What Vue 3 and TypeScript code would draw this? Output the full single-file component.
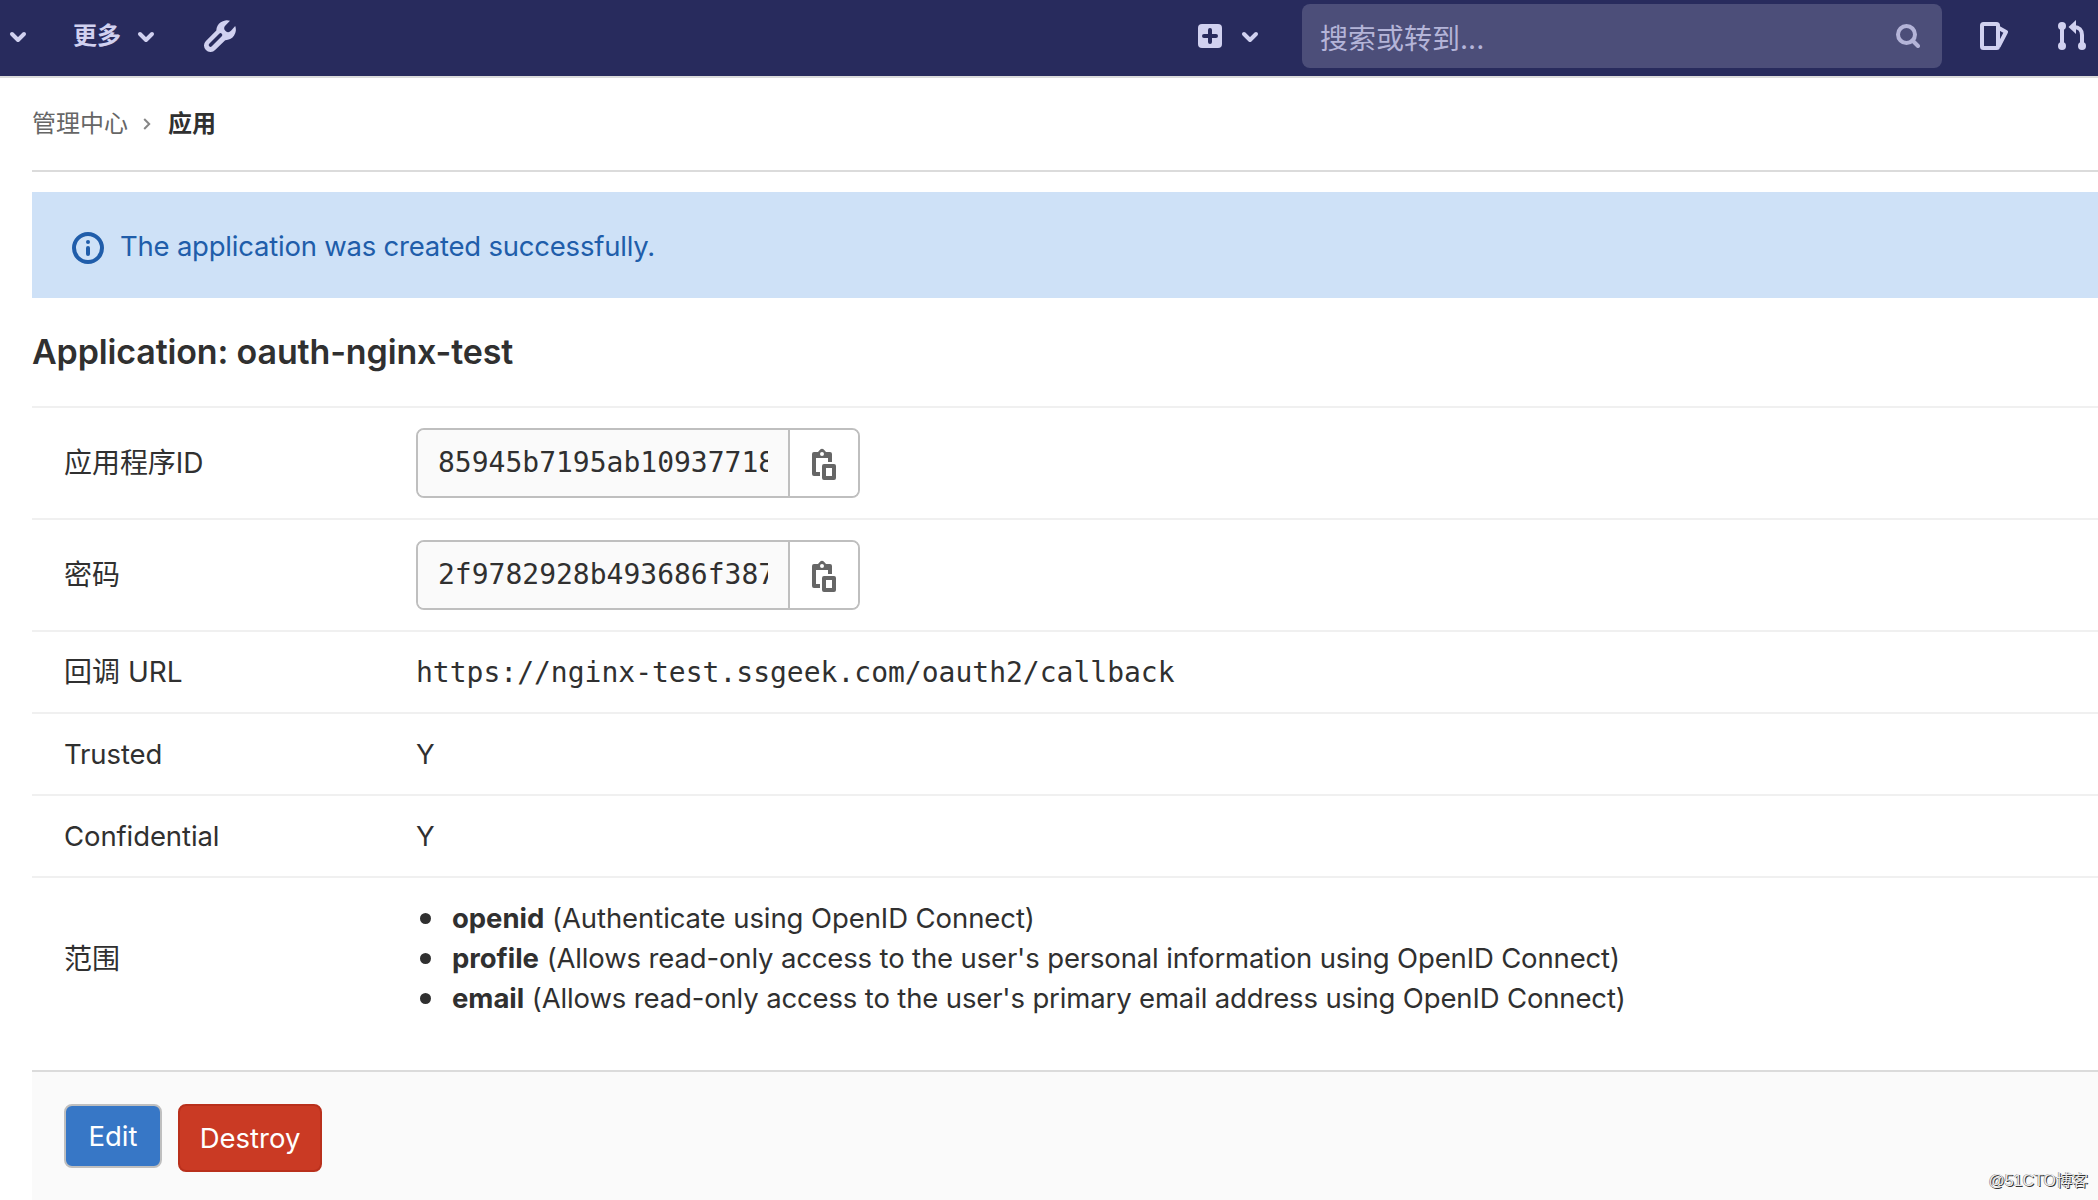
<script setup lang="ts">
interface Credential { label: string; value: string }
interface Flag { label: string; value: string }
interface Scope { name: string; text: string }

const credentials: Credential[] = [
  { label: '应用程序ID', value: '85945b7195ab10937718' },
  { label: '密码', value: '2f9782928b493686f387' },
]
const flags: Flag[] = [
  { label: 'Trusted', value: 'Y' },
  { label: 'Confidential', value: 'Y' },
]
const scopes: Scope[] = [
  { name: 'openid', text: '(Authenticate using OpenID Connect)' },
  { name: 'profile', text: "(Allows read-only access to the user's personal information using OpenID Connect)" },
  { name: 'email', text: "(Allows read-only access to the user's primary email address using OpenID Connect)" },
]
</script>

<template>
  <div class="page">
    <header class="navbar">
      <svg class="chevron first" viewBox="0 0 16 10"><path d="M2 2l6 6 6-6" /></svg>
      <span class="more">更多</span>
      <svg class="chevron second" viewBox="0 0 16 10"><path d="M2 2l6 6 6-6" /></svg>
      <svg class="wrench" viewBox="0 0 32 32">
        <path d="M26 .8A10.500 10.500 0 0 0 12.300 10.500L1.900 20.900A6.500 6.500 0 0 0 11.100 30.100L21.200 20.200A10.500 10.500 0 0 0 31.200 6L27 10.800a3.800 3.800 0 0 1-5.600-5.200z" />
        <path class="slot" d="M6.500 25L16.500 15" />
      </svg>
      <svg class="plus" viewBox="0 0 24 24">
        <rect width="24" height="24" rx="4" />
        <path d="M12 6v12M6 12h12" />
      </svg>
      <svg class="chevron third" viewBox="0 0 16 10"><path d="M2 2l6 6 6-6" /></svg>
      <div class="search">
        <span>搜索或转到...</span>
        <svg class="magnifier" viewBox="0 0 24 24"><circle cx="10.500" cy="10.500" r="8.500" /><path d="M16.500 16.500L22 22" /></svg>
      </div>
      <svg class="issues" viewBox="0 0 28 28"><rect x="2" y="2" width="16" height="24" rx="1.500" /><path d="M18 5.500l8 4.500-7.500 14.500" /></svg>
      <svg class="merge" viewBox="0 0 28 30">
        <circle cx="4" cy="6" r="4" /><circle cx="4" cy="26" r="4" /><circle cx="24" cy="26" r="4" />
        <path class="line" d="M4 6v20M16 7c5 0 8 3 8 8v11" />
        <path d="M10.500 7L18 0v14z" />
      </svg>
    </header>

    <main class="content">
      <nav class="breadcrumb">
        <span class="crumb">管理中心</span>
        <svg viewBox="0 0 8 12"><path d="M1.200 1l5 5-5 5" /></svg>
        <strong>应用</strong>
      </nav>

      <div class="alert">
        <svg viewBox="0 0 32 32">
          <circle class="ring" cx="16" cy="16" r="14" />
          <circle cx="16" cy="10" r="2" />
          <path class="stem" d="M16 16v6" />
        </svg>
        <span>The application was created successfully.</span>
      </div>

      <h3 class="title">Application: oauth-nginx-test</h3>

      <div class="table">
        <div v-for="c in credentials" :key="c.label" class="row tall">
          <div class="label cjk">{{ c.label }}</div>
          <div class="group">
            <div class="field"><span class="clip">{{ c.value }}</span></div>
            <button class="copy" aria-label="Copy">
              <svg viewBox="0 0 24 32">
                <path fill-rule="evenodd" d="M2 4h4l2.200-2.400a2.500 2.500 0 0 1 3.600 0L14 4h4a2 2 0 0 1 2 2v8h-4v-4H4v14h4v4H2a2 2 0 0 1-2-2V6a2 2 0 0 1 2-2zM10 4a2 2 0 1 0 0 4 2 2 0 0 0 0-4z" />
                <path fill-rule="evenodd" d="M12 16h10a2 2 0 0 1 2 2v12a2 2 0 0 1-2 2H12a2 2 0 0 1-2-2V18a2 2 0 0 1 2-2zM14 20v8h6v-8z" />
              </svg>
            </button>
          </div>
        </div>
        <div class="row">
          <div class="label cjk">回调 URL</div>
          <div class="mono">https://nginx-test.ssgeek.com/oauth2/callback</div>
        </div>
        <div v-for="f in flags" :key="f.label" class="row">
          <div class="label">{{ f.label }}</div>
          <div>{{ f.value }}</div>
        </div>
        <div class="row scopes">
          <div class="label cjk">范围</div>
          <ul>
            <li v-for="s in scopes" :key="s.name"><strong>{{ s.name }}</strong> <span>{{ s.text }}</span></li>
          </ul>
        </div>
      </div>

      <div class="actions">
        <button class="btn edit">Edit</button>
        <button class="btn destroy">Destroy</button>
      </div>
    </main>
    <div class="watermark">@51CTO博客</div>
  </div>
</template>

<style>
html, body { margin: 0; background: #fff; overflow: hidden; }
</style>

<style scoped>
* { box-sizing: border-box; }
.page {
  position: relative;
  width: 2098px;
  height: 1200px;
  overflow: hidden;
  display: flex;
  flex-direction: column;
  color: #303030;
  background: #fff;
  font: 27.5px/40px Inter, "Noto Sans CJK SC", sans-serif;
}
svg { display: block; flex: none; fill: none; }
.navbar {
  height: 78px;
  flex: none;
  display: flex;
  align-items: flex-start;
  background: #282b5d;
  border-bottom: 2px solid #dbdbdb;
  color: #d1d1f0;
}
.chevron { width: 16px; height: 10px; margin-top: 32px; overflow: visible; }
.chevron path { stroke: #d1d1f0; stroke-width: 4; stroke-linecap: round; stroke-linejoin: round; }
.first { margin-left: 10px; }
.more { margin: 16px 0 0 47px; width: 49px; font-size: 24px; font-weight: 700; white-space: nowrap; }
.second { margin-left: 16px; }
.wrench { width: 32px; height: 32px; margin: 20px 0 0 50px; fill: #d1d1f0; }
.slot { stroke: #282b5d; stroke-width: 3.600; stroke-linecap: round; }
.plus { width: 24px; height: 24px; margin: 24px 0 0 auto; }
.plus rect { fill: #d1d1f0; }
.plus path { stroke: #282b5d; stroke-width: 4; stroke-linecap: round; }
.third { margin-left: 20px; }
.search {
  width: 640px;
  height: 64px;
  margin: 4px 0 0 44px;
  padding: 0 22px 0 18px;
  display: flex;
  align-items: center;
  justify-content: space-between;
  border-radius: 8px;
  background: #4c4e79;
  color: #b4b4d8;
  font-size: 28px;
}
.search span { padding-top: 5px; }
.search svg { width: 24px; height: 24px; stroke: #b4b4d8; stroke-width: 4; stroke-linecap: round; }
.issues { width: 28px; height: 28px; margin: 22px 0 0 38px; stroke: #d1d1f0; stroke-width: 4; stroke-linejoin: round; }
.merge { width: 28px; height: 30px; margin: 20px 12px 0 50px; fill: #d1d1f0; }
.merge .line { fill: none; stroke: #d1d1f0; stroke-width: 4; }
.content { flex: 1; margin-left: 32px; display: flex; flex-direction: column; }
.breadcrumb {
  height: 94px;
  flex: none;
  display: flex;
  align-items: center;
  border-bottom: 2px solid #dbdbdb;
  font-size: 24px;
}
.crumb { color: #666; }
.breadcrumb svg { width: 8px; height: 12px; margin: 0 17px 0 15px; stroke: #868686; stroke-width: 2; }
.alert {
  height: 106px;
  flex: none;
  margin-top: 20px;
  padding: 6px 0 0 40px;
  display: flex;
  align-items: center;
  gap: 16px;
  background: #cee1f7;
  color: #205daa;
  letter-spacing: -0.22px;
}
.alert span { padding-bottom: 4px; }
.alert svg { width: 32px; height: 32px; fill: #205daa; }
.alert .ring, .alert .stem { fill: none; stroke: #205daa; stroke-width: 4; stroke-linecap: round; }
.title { margin: 32px 0 0; height: 76px; flex: none; font-size: 34px; line-height: 44px; font-weight: 600; letter-spacing: -0.140px; }
.row {
  height: 82px;
  display: grid;
  grid-template-columns: 352px 1fr;
  padding-left: 32px;
  align-items: center;
  border-top: 2px solid #f0f0f0;
  letter-spacing: -0.100px;
}
.tall { height: 112px; }
.cjk { font-size: 28px; letter-spacing: 0; }
.tall .label { padding-bottom: 1px; letter-spacing: -0.050px; }
.group { display: flex; width: 444px; height: 70px; border: 2px solid #bfbfbf; border-radius: 8px; overflow: hidden; }
.field { width: 372px; padding: 0 20px; border-right: 2px solid #bfbfbf; background: #fafafa; display: flex; align-items: center; }
.clip { width: 330px; overflow: hidden; white-space: nowrap; }
.clip, .mono { font-family: "DejaVu Sans Mono", "Liberation Mono", monospace; font-size: 28px; letter-spacing: 0; }
.mono { padding-top: 2px; }
.copy { flex: 1; display: flex; align-items: center; justify-content: center; padding: 2px 0 0; border: 0; background: #fff; }
.copy svg { width: 24px; height: 32px; fill: #666; }
.scopes { height: 194px; }
ul { margin: 0; padding: 0 0 32px 36px; list-style: none; }
li { position: relative; white-space: nowrap; letter-spacing: -0.040px; }
li::before {
  content: "";
  position: absolute;
  left: -32px;
  top: 15px;
  width: 11px;
  height: 11px;
  border-radius: 50%;
  background: #303030;
}
li span { letter-spacing: -0.145px; }
li:first-child span { letter-spacing: -0.080px; }
.scopes .cjk { padding-bottom: 31px; }
.actions {
  flex: 1;
  display: flex;
  align-items: flex-start;
  gap: 16px;
  padding: 32px;
  background: #fafafa;
  border-top: 2px solid #dbdbdb;
}
.btn { padding: 0; border-radius: 8px; color: #fff; font: 27.5px/40px Inter, sans-serif; }
.edit { width: 98px; height: 64px; background: #3777c6; border: 2px solid #bfbfbf; }
.destroy { width: 144px; height: 68px; background: #ca3a24; border: 2px solid #b9301c; }
.watermark {
  position: absolute;
  right: 10px;
  bottom: 9px;
  font: 16px/20px "Liberation Sans", "Noto Sans CJK SC", sans-serif;
  color: #eee;
  text-shadow: 1px 1px 0 #333, -0.500px -0.500px 0 #777;
}
</style>
